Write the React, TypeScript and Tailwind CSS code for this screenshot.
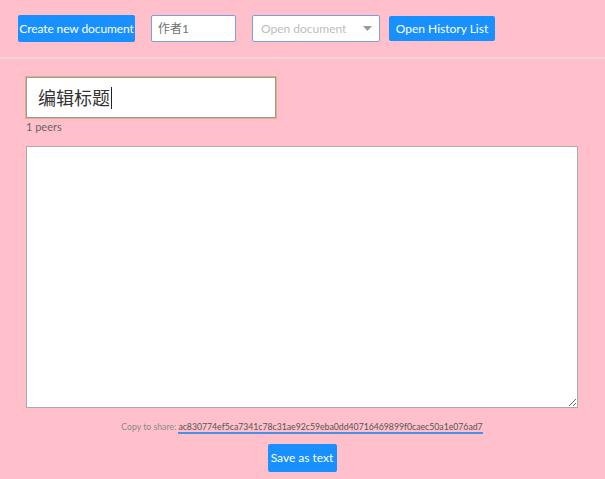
import React from "react";

const hash = "ac830774ef5ca7341c78c31ae92c59eba0dd40716469899f0caec50a1e076ad7";

const App = () => {
  return (
    <div className="min-h-screen w-full bg-[#ffc0cb] font-['Lato','Noto_Sans_CJK_SC',sans-serif] text-[#333]">
      <header className="flex items-center px-[18px] pt-[15px] pb-[15px] border-b-2 border-[#f6d2d8]">
        <button className="h-[27px] w-[117px] whitespace-nowrap rounded-[2px] bg-[#1890ff] text-[12px] tracking-[-0.1px] text-white">
          Create new document
        </button>
        <div className="ml-[16px] flex h-[27px] w-[85px] items-center rounded-[2px] border border-[#7b9fd9] bg-white px-[6px] text-[12px] text-[#6f6f6f]">
          作者1
        </div>
        <div className="ml-[16px] flex h-[27px] w-[128px] items-center justify-between rounded-[2px] border border-[#7b9fd9] bg-white pl-[8px] pr-[7px] text-[12px] text-[#bdbdbd]">
          <span>Open document</span>
          <svg width="9" height="5" viewBox="0 0 9 5">
            <path d="M0 0h9L4.5 5z" fill="#9a9a9a" />
          </svg>
        </div>
        <button className="ml-[9px] h-[25px] w-[106px] whitespace-nowrap rounded-[2px] bg-[#1890ff] text-[12px] text-white">
          Open History List
        </button>
      </header>

      <main className="px-[26px] pt-[18px] pr-[27px]">
        <div className="flex h-[41px] w-[250px] items-center border border-[#9a9a9a] bg-white pl-[11px] text-[18px] text-[#333] outline outline-1 outline-[#e2b07c] font-['Noto_Sans_CJK_SC',serif]">
          <span>编辑标题</span>
          <span className="ml-[1px] inline-block h-[22px] w-px bg-[#222]" />
        </div>
        <p className="mt-[1px] text-[11px] leading-[15px] text-[#666]">1 peers</p>
        <textarea className="mt-[12px] block h-[262px] w-full resize border border-[#aaa] bg-white outline-none" />
        <div className="mt-[13px] flex flex-col items-center">
          <p className="text-[8.7px] leading-[12px] text-[#8a8a8a]">
            Copy to share:{" "}
            <a className="border-b-2 border-[#4a8fe8] text-[#555]">{hash}</a>
          </p>
          <button className="mt-[11px] h-[28px] w-[69px] whitespace-nowrap rounded-[2px] bg-[#1890ff] text-[12px] text-white">
            Save as text
          </button>
        </div>
      </main>
    </div>
  );
};

export default App;
